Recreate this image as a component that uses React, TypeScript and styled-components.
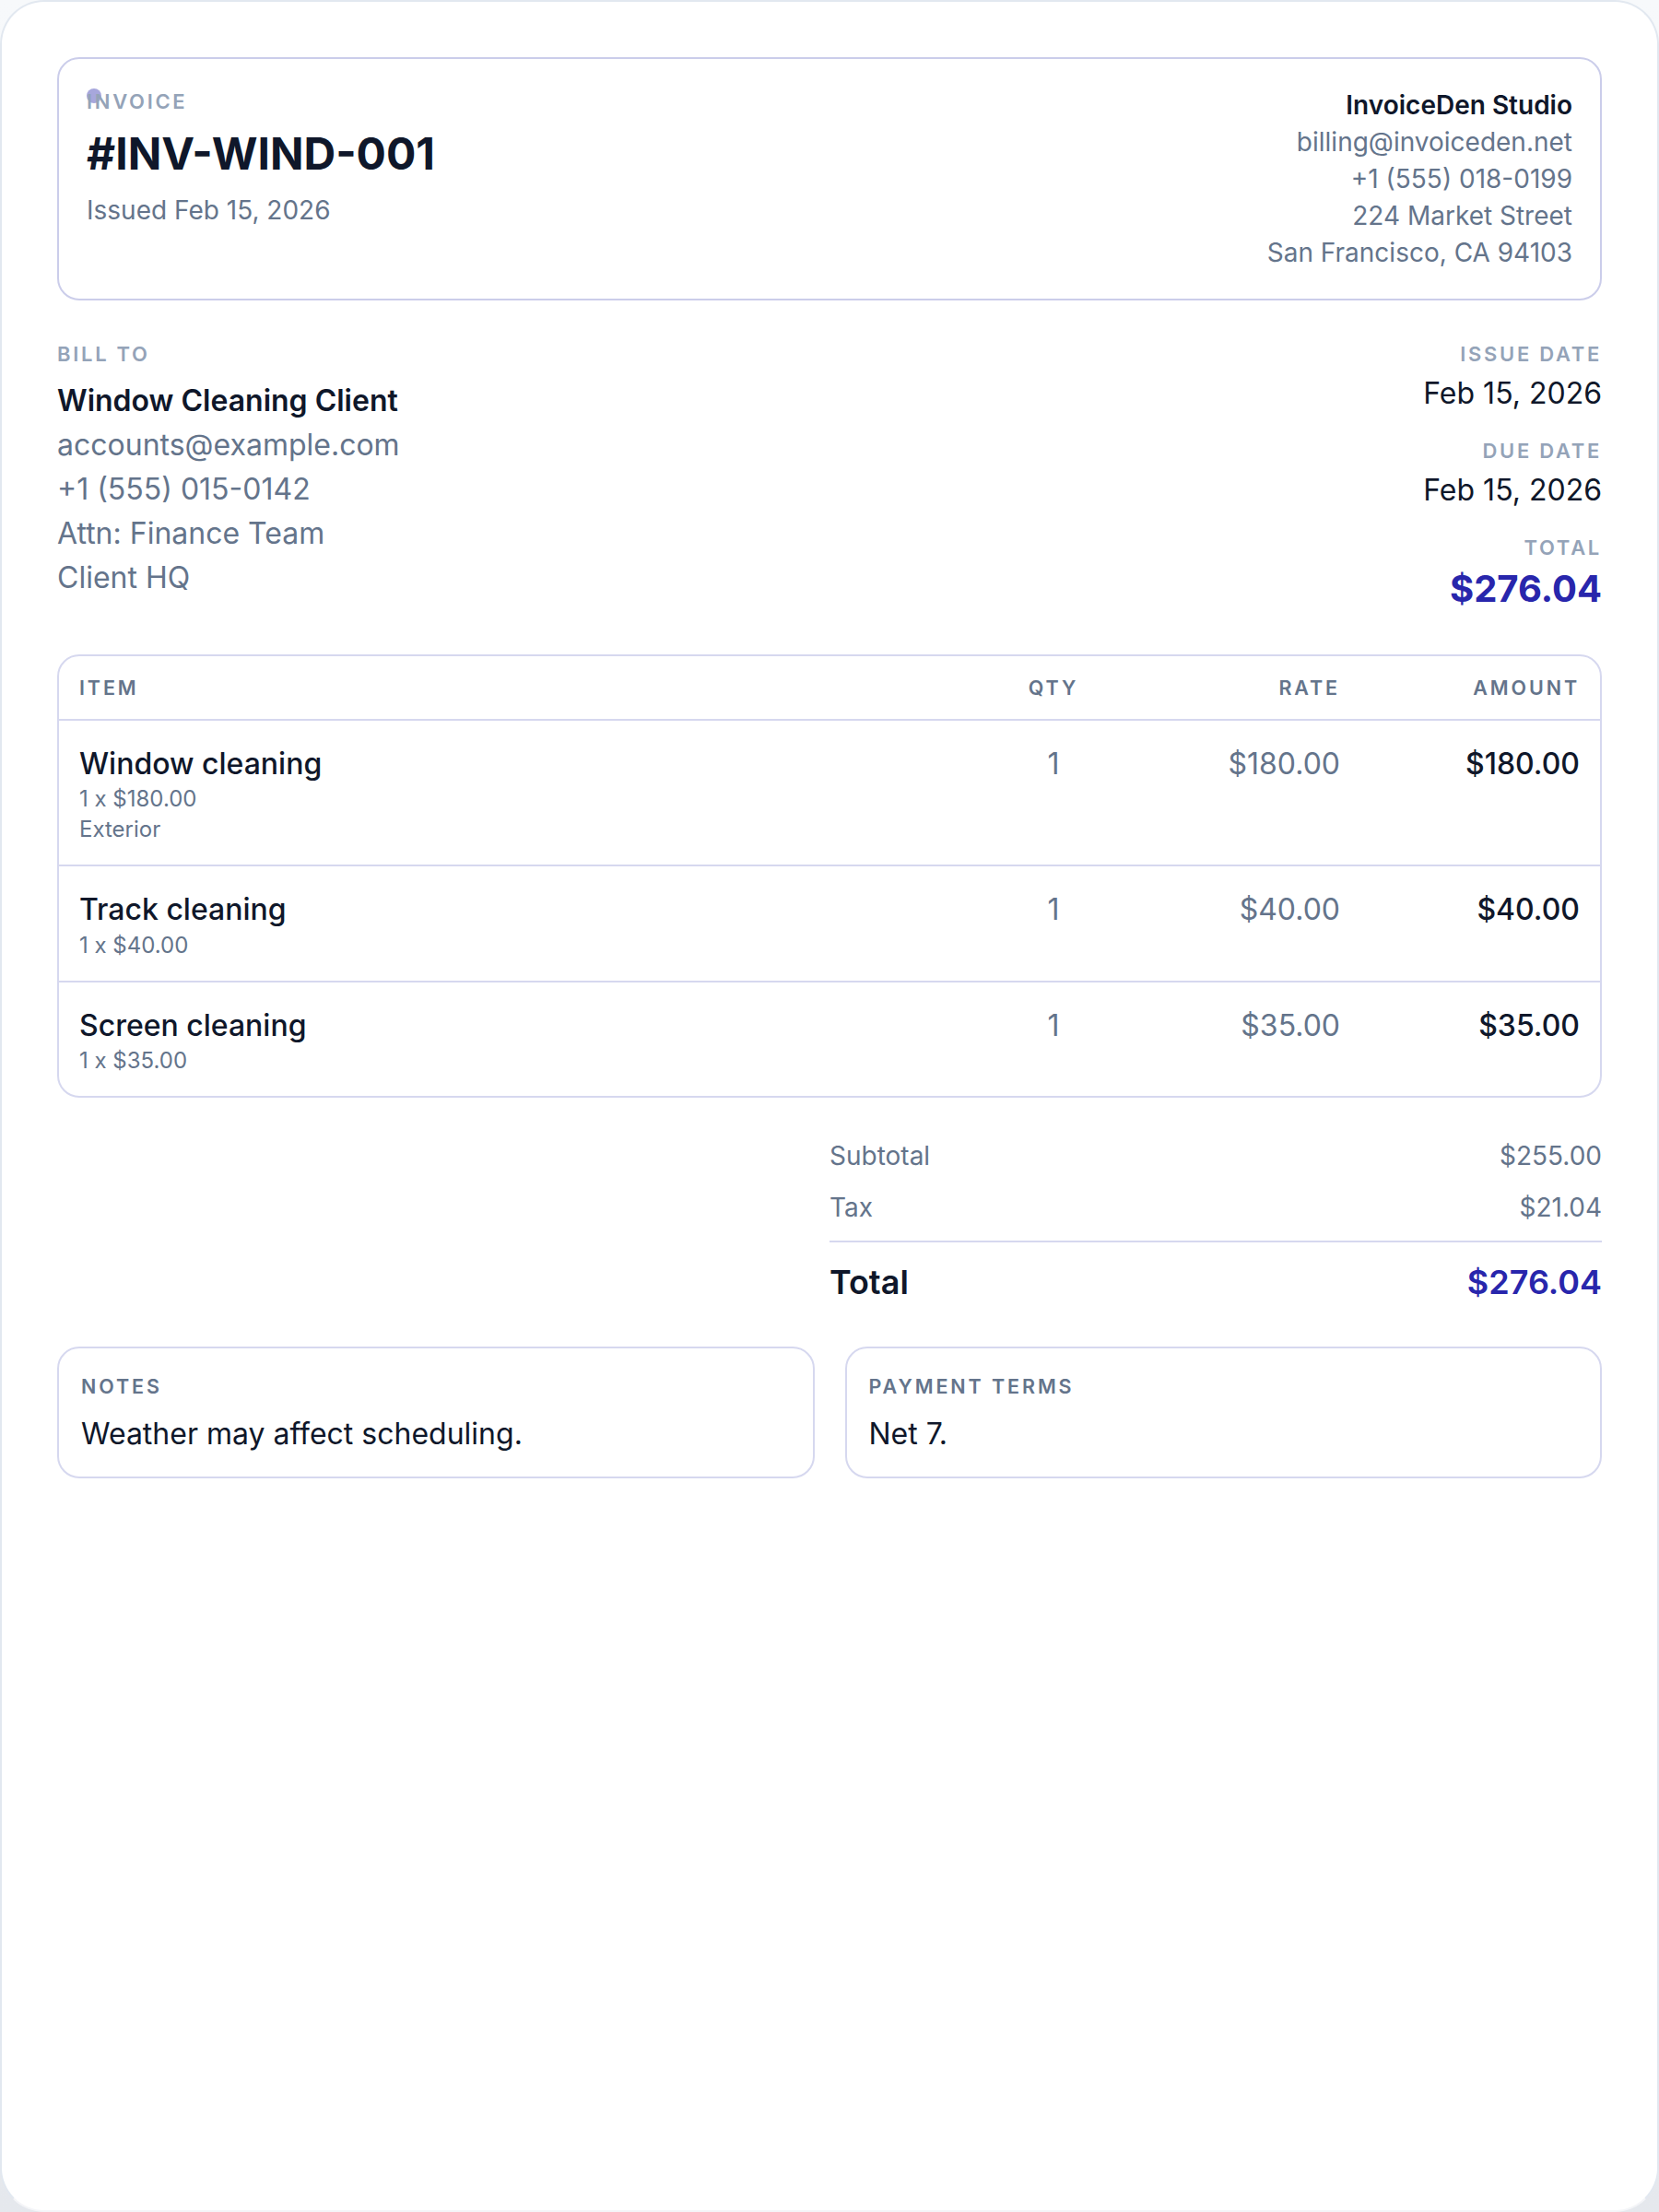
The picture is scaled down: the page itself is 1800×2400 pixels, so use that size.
import styled, { createGlobalStyle } from 'styled-components';

const GlobalStyle = createGlobalStyle`
  * {
    box-sizing: border-box;
  }

  html,
  body {
    margin: 0;
    background: linear-gradient(#f7f9fb, #e5e8ed);
  }

  body {
    font-family: Inter, 'Liberation Sans', sans-serif;
    color: #0f172a;
  }
`;

const ACCENT = '#2826ac';
const LINE = '#d6d8ef';
const MUTED = '#64748b';
const FAINT = '#94a3b8';

const Sheet = styled.main`
  width: 1800px;
  height: 2400px;
  padding: 60px;
  border: 2px solid #e2e8f0;
  border-bottom-color: #f4f5f8;
  border-radius: 48px;
  background: #fff;
`;

const Label = styled.div<{ $strong?: boolean }>`
  font-size: ${({ $strong }) => ($strong ? '21.5px' : '22px')};
  line-height: 30px;
  font-weight: 600;
  letter-spacing: ${({ $strong }) => ($strong ? '2.9px' : '2.7px')};
  text-transform: uppercase;
  color: ${({ $strong }) => ($strong ? MUTED : FAINT)};
`;

const Masthead = styled.header`
  position: relative;
  display: flex;
  justify-content: space-between;
  padding: 30px;
  border: 2px solid #cbcdea;
  border-radius: 24px;
`;

const Dot = styled.span`
  position: absolute;
  top: 32px;
  left: 30px;
  width: 16px;
  height: 16px;
  border-radius: 50%;
  background: rgba(35, 34, 168, 0.4);
`;

const Heading = styled.div`
  position: relative;

  ${Label} {
    line-height: 32px;
  }
`;

const InvoiceNumber = styled.h1`
  margin: 8px 0 0;
  font-size: 48px;
  line-height: 66px;
  font-weight: 700;
`;

const Issued = styled.p`
  margin: 8px 0 0;
  font-size: 28px;
  line-height: 40px;
  color: ${MUTED};
`;

const Studio = styled.address`
  font-style: normal;
  font-size: 28px;
  line-height: 40px;
  text-align: right;
  color: ${MUTED};

  strong {
    display: block;
    font-weight: 600;
    color: #0f172a;
  }
`;

const Summary = styled.section`
  display: flex;
  justify-content: space-between;
  margin-top: 43px;
`;

const BillTo = styled.div`
  font-size: 32px;
  line-height: 48px;
  color: ${MUTED};

  strong {
    display: block;
    margin-top: 12px;
    font-weight: 600;
    color: #0f172a;
  }
`;

const Dates = styled.dl`
  margin: 0;
  text-align: right;

  dd {
    margin: 4px 0 23px;
    font-size: 32px;
    line-height: 48px;
  }

  dd:last-child {
    margin-bottom: 0;
  }
`;

const DueTotal = styled.span`
  display: block;
  font-size: 40px;
  line-height: 52px;
  font-weight: 700;
  color: ${ACCENT};
`;

const Table = styled.section`
  margin-top: 45px;
  border: 2px solid ${LINE};
  border-radius: 24px;
`;

const TableRow = styled.div<{ $head?: boolean }>`
  display: grid;
  grid-template-columns: 1fr 154px 256px 260px;
  align-items: start;
  padding: ${({ $head }) => ($head ? '19px 0' : '25px 0 22px')};

  & + & {
    border-top: 2px solid ${LINE};
  }
`;

const Cell = styled.div<{ $align?: 'center' | 'right'; $strong?: boolean }>`
  padding: 0 22px;
  font-size: 32px;
  line-height: 43.4px;
  text-align: ${({ $align }) => $align ?? 'left'};
  font-weight: ${({ $strong }) => ($strong ? 500 : 400)};
  color: ${({ $strong }) => ($strong ? '#0f172a' : MUTED)};
`;

const ItemName = styled.div`
  font-weight: 500;
  color: #0f172a;
`;

const ItemNote = styled.div`
  font-size: 24px;
  line-height: 33px;
  color: ${MUTED};
`;

const Totals = styled.section`
  width: 838px;
  margin: 35px 0 0 auto;
`;

const TotalRow = styled.div`
  display: flex;
  justify-content: space-between;
  padding: 8px 0;
  font-size: 28px;
  line-height: 40px;
  color: ${MUTED};
`;

const TotalFinal = styled.div`
  display: flex;
  justify-content: space-between;
  align-items: center;
  margin-top: 7.5px;
  padding: 18.5px 0 0;
  border-top: 2px solid ${LINE};
  font-size: 36px;
  line-height: 50px;
  font-weight: 600;
`;

const TotalAmount = styled.span`
  color: ${ACCENT};
`;

const Cards = styled.section`
  display: grid;
  grid-template-columns: 1fr 1fr;
  gap: 33px;
  margin-top: 45px;
`;

const Card = styled.article`
  padding: 26px 24px 22.6px;
  border: 2px solid ${LINE};
  border-radius: 24px;

  p {
    margin: 12.5px 0 0;
    font-size: 32px;
    line-height: 48px;
  }
`;

const ITEMS = [
  { name: 'Window cleaning', rate: '$180.00', notes: ['1 x $180.00', 'Exterior'] },
  { name: 'Track cleaning', rate: '$40.00', notes: ['1 x $40.00'] },
  { name: 'Screen cleaning', rate: '$35.00', notes: ['1 x $35.00'] },
];

export default function App() {
  return (
    <>
      <GlobalStyle />
      <Sheet>
        <Masthead>
          <Dot />
          <Heading>
            <Label>Invoice</Label>
            <InvoiceNumber>#INV-WIND-001</InvoiceNumber>
            <Issued>Issued Feb 15, 2026</Issued>
          </Heading>
          <Studio>
            <strong>InvoiceDen Studio</strong>
            billing@invoiceden.net
            <br />
            +1 (555) 018-0199
            <br />
            224 Market Street
            <br />
            San Francisco, CA 94103
          </Studio>
        </Masthead>

        <Summary>
          <BillTo>
            <Label>Bill to</Label>
            <strong>Window Cleaning Client</strong>
            accounts@example.com
            <br />
            +1 (555) 015-0142
            <br />
            Attn: Finance Team
            <br />
            Client HQ
          </BillTo>
          <Dates>
            <dt>
              <Label>Issue date</Label>
            </dt>
            <dd>Feb 15, 2026</dd>
            <dt>
              <Label>Due date</Label>
            </dt>
            <dd>Feb 15, 2026</dd>
            <dt>
              <Label>Total</Label>
            </dt>
            <dd>
              <DueTotal>$276.04</DueTotal>
            </dd>
          </Dates>
        </Summary>

        <Table>
          <TableRow $head>
            <Cell>
              <Label $strong>Item</Label>
            </Cell>
            <Cell $align="center">
              <Label $strong>Qty</Label>
            </Cell>
            <Cell $align="right">
              <Label $strong>Rate</Label>
            </Cell>
            <Cell $align="right">
              <Label $strong>Amount</Label>
            </Cell>
          </TableRow>
          {ITEMS.map(({ name, rate, notes }) => (
            <TableRow key={name}>
              <Cell>
                <ItemName>{name}</ItemName>
                {notes.map((note) => (
                  <ItemNote key={note}>{note}</ItemNote>
                ))}
              </Cell>
              <Cell $align="center">1</Cell>
              <Cell $align="right">{rate}</Cell>
              <Cell $align="right" $strong>
                {rate}
              </Cell>
            </TableRow>
          ))}
        </Table>

        <Totals>
          <TotalRow>
            <span>Subtotal</span>
            <span>$255.00</span>
          </TotalRow>
          <TotalRow>
            <span>Tax</span>
            <span>$21.04</span>
          </TotalRow>
          <TotalFinal>
            <span>Total</span>
            <TotalAmount>$276.04</TotalAmount>
          </TotalFinal>
        </Totals>

        <Cards>
          <Card>
            <Label $strong>Notes</Label>
            <p>Weather may affect scheduling.</p>
          </Card>
          <Card>
            <Label $strong>Payment terms</Label>
            <p>Net 7.</p>
          </Card>
        </Cards>
      </Sheet>
    </>
  );
}
